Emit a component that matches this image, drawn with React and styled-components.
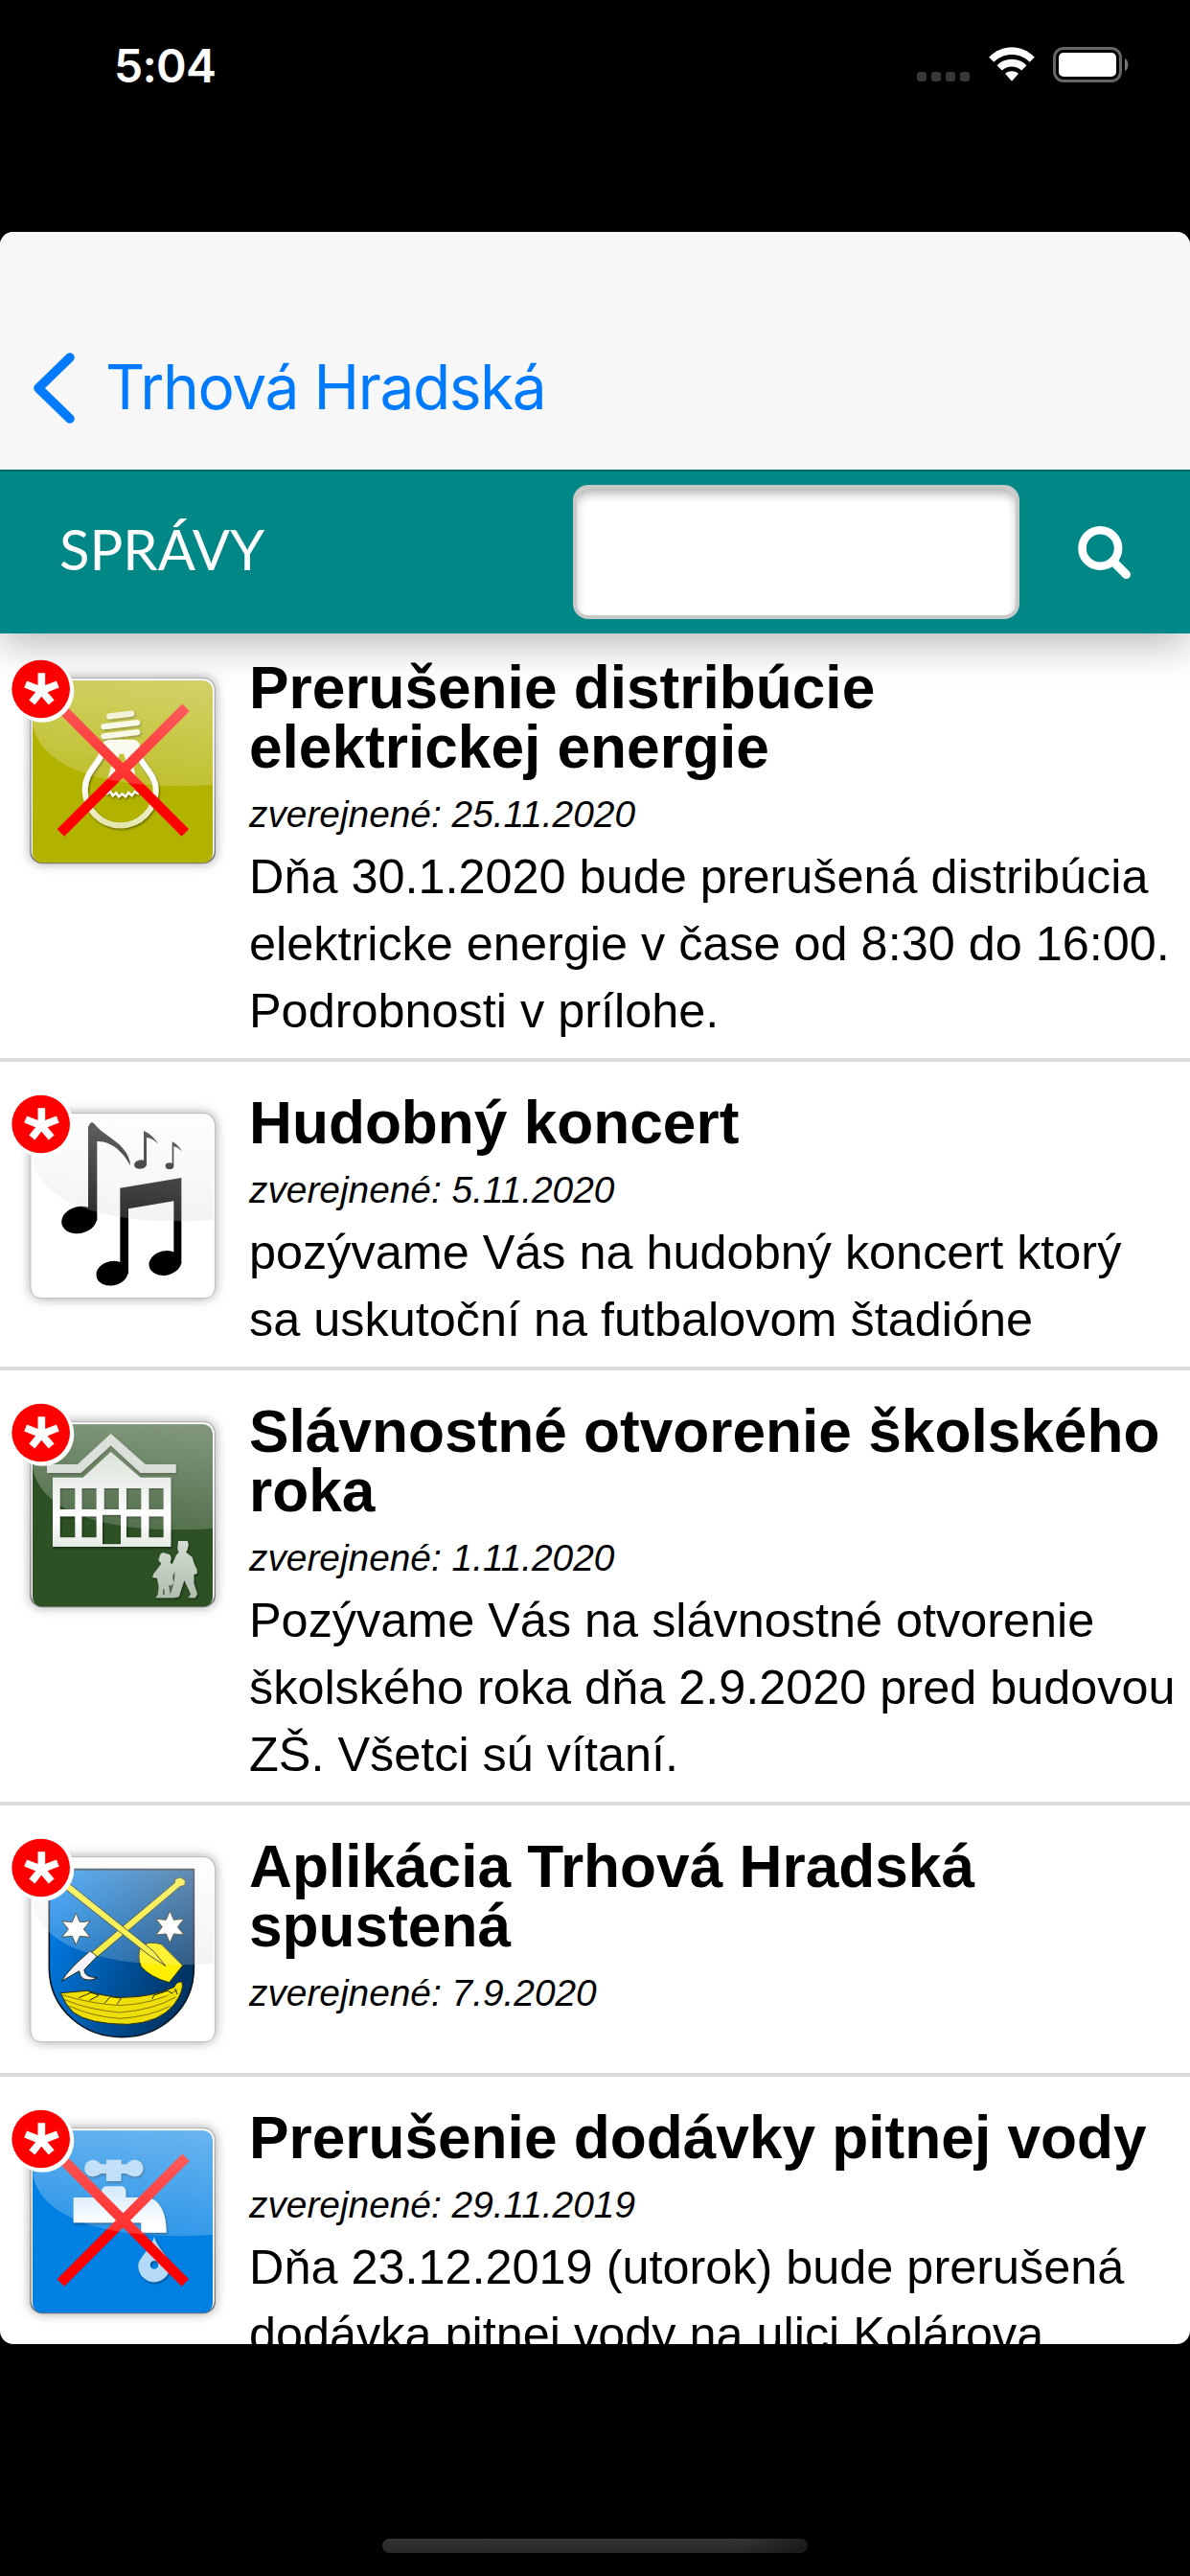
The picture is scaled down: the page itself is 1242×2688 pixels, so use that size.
import React from "react";
import styled, { createGlobalStyle } from "styled-components";

const GlobalStyle = createGlobalStyle`
  * { box-sizing: border-box; }
  body { margin: 0; background: #000; }
`;

const Screen = styled.div`
  display: flex;
  flex-direction: column;
  width: 1242px;
  height: 2688px;
  overflow: hidden;
  background: #000;
  color: #000;
  font-family: "Liberation Sans", Arial, sans-serif;
`;

const StatusBar = styled.header`
  display: flex;
  justify-content: space-between;
  align-items: flex-start;
  height: 242px;
  padding: 49px 64px 0 119px;
`;

const Clock = styled.span`
  color: #fff;
  font: 600 48px/40px Inter, sans-serif;
  letter-spacing: -0.7px;
`;

const StatusIcons = styled.div`
  display: flex;
  align-items: flex-start;
`;

const Signal = styled.div`
  display: flex;
  gap: 5px;
  margin: 26px 20px 0 0;
`;

const SignalDot = styled.i`
  width: 10px;
  height: 10px;
  border-radius: 3px;
  background: #383838;
`;

const WifiIcon = styled.svg`
  width: 48px;
  height: 37px;
  margin-right: 19px;
`;

const BatteryIcon = styled.svg`
  width: 79px;
  height: 37px;
`;

const Sheet = styled.main`
  display: flex;
  flex-direction: column;
  height: 2204px;
  border-radius: 14px;
  overflow: hidden;
  background: #fff;
`;

const NavBar = styled.nav`
  display: flex;
  flex: none;
  align-items: flex-end;
  position: relative;
  z-index: 2;
  height: 248px;
  padding: 0 0 46px 31px;
  background: #f7f7f7;
`;

const BackLink = styled.a`
  display: flex;
  align-items: center;
  gap: 27px;
  color: #007aff;
  font: 400 64px/80px Inter, sans-serif;
  letter-spacing: -1.4px;
`;

const Chevron = styled.svg`
  width: 52px;
  height: 80px;
`;

const Toolbar = styled.div`
  display: flex;
  flex: none;
  align-items: center;
  position: relative;
  z-index: 1;
  height: 171px;
  padding: 0 61px 0 62px;
  background: #008786;
  box-shadow: inset 0 2px 0 #006c6b, 0 12px 40px rgba(0, 0, 0, 0.27);
`;

const ToolbarTitle = styled.h1`
  flex: 1;
  margin: 0;
  padding-bottom: 6px;
  color: #fff;
  font: 400 58px/70px Lato, sans-serif;
`;

const SearchField = styled.input`
  width: 466px;
  height: 140px;
  border: 4px solid #c9c9c9;
  border-radius: 16px;
  background: #fff;
  box-shadow: inset 0 7px 11px -2px rgba(0, 0, 0, 0.3);
`;

const SearchIcon = styled.svg`
  width: 56px;
  height: 56px;
  margin-left: 61px;
`;

const NewsList = styled.ul`
  flex: none;
  margin: -7px 0 0;
  padding: 0;
  list-style: none;
`;

const NewsRow = styled.li`
  display: flex;
  padding-right: 11px;
  border-bottom: 4px solid #dcdcdc;
`;

const NewsIcon = styled.svg`
  flex: none;
  width: 250px;
  height: 250px;
  margin: 16px 10px 13px 0;
`;

const NewsText = styled.article`
  padding: 33px 0 14px;
`;

const NewsTitle = styled.h2`
  margin: 0;
  font-size: 62.2px;
  font-weight: 700;
  line-height: 62px;
`;

const NewsDate = styled.p`
  margin: 8px 0 0;
  font-size: 38.85px;
  font-style: italic;
  line-height: 61px;
`;

const NewsBody = styled.p`
  margin: 0;
  font-size: 50.4px;
  line-height: 70px;
`;

const HomeBar = styled.footer`
  display: flex;
  justify-content: center;
  padding-top: 203px;
`;

const HomeIndicator = styled.div`
  width: 444px;
  height: 15px;
  border-radius: 8px;
  background: linear-gradient(90deg, transparent 85%, rgba(0, 0, 0, 0.4)),
    linear-gradient(#343434, #262626);
`;

function Cross() {
  return (
    <path d="M190 205 580 597M190 597 582 205" stroke="#f00" strokeWidth="32" fill="none" />
  );
}

function Bulb() {
  return (
    <>
      <g fill="none" stroke="#f6f6e0" strokeLinecap="round" filter="url(#artShadow)">
        <path d="M343 232 411 224" stroke="#ecedc6" strokeWidth="19" />
        <path d="M325 265 430 252M325 295 430 282" strokeWidth="18" />
        <path d="M320 348C305 385 266 410 266 462A111 112 0 0 0 488 462C488 412 438 385 432 345" stroke="url(#bulbGlass)" strokeWidth="18" />
        <path d="M335 475l10-8 8 14 11-9 8 12 11-9 10 9 9-13 11 9 9-12 10 6" stroke="#fff" strokeWidth="7" />
      </g>
      <path d="M316 350 321 320Q326 305 346 305H414Q435 307 438 322V345L410 350 435 470 415 455 388 350H374L342 470 330 455 358 350Z" fill="#f8f8ea" />
      <Cross />
    </>
  );
}

function Notes() {
  return (
    <g transform="translate(0 4)" fill="#000">
      <path d="M276 152Q285 128 297 144C318 172 358 188 384 218Q408 246 408 273C390 235 350 195 304 197V445H276Z" />
      <ellipse cx="248" cy="443" rx="56" ry="42" transform="rotate(-14 248 443)" />
      <path d="M376 343 568 311V580H544V384L402 408V612H376Z" />
      <ellipse cx="351" cy="610" rx="50" ry="38" transform="rotate(-12 351 610)" />
      <ellipse cx="517" cy="578" rx="51" ry="38" transform="rotate(-12 517 578)" />
      <path d="M450 163Q480 178 496 206 480 188 459 185V269H450Z" />
      <ellipse cx="440" cy="269" rx="20" ry="14" transform="rotate(-10 440 269)" />
      <path d="M539 198Q558 208 570 228 556 215 544 212V274H539Z" />
      <ellipse cx="531" cy="274" rx="13" ry="10" />
    </g>
  );
}

function School() {
  return (
    <g transform="translate(0 -3)" filter="url(#artShadow)">
      <path d="M147 249H243L347 153 455 249H551V276H440L347 190 253 276H147Z" fill="#c9d2c6" />
      <path
        d="M165 290H260L347 210 440 290H535V507H165ZM188 324V390H235V324ZM256 324V390H302V324ZM326 324V390H372V324ZM396 324V390H442V324ZM466 324V390H512V324ZM188 412V478H235V412ZM256 412V478H302V412ZM321 407V499H378V407ZM396 412V478H442V412ZM466 412V478H512V412Z"
        fillRule="evenodd"
        fill="url(#schoolWall)"
      />
      <path
        d="M558 489H587L590 499 587 516 582 524 602 540 608 560 617 580V591L607 594V622L618 655 611 667H590L597 655 577 612 560 664 545 667H487L494 658 497 633 492 606 477 602 481 592 497 571 505 560 496 549 502 530 510 525 532 532 536 542 533 557 539 562 552 533 560 525 556 513Z"
        fill="url(#walkers)"
      />
      <path d="M547 585 540 600 544 622 547 602ZM528 627 535 629 544 622 533 657ZM510 640 515 640V658H510Z" fill="#506a4b" />
    </g>
  );
}

const star = "0,-50 12,-22 44,-25 24,0 44,25 12,22 0,50 -12,22 -44,25 -24,0 -44,-25 -12,-22";

function CoatOfArms() {
  return (
    <g stroke="#262a10" strokeWidth="3">
      <path d="M154 152H607V460C607 590 500 677 382 677 262 677 154 590 154 460Z" fill="url(#shield)" stroke="#0a1420" strokeWidth="5" />
      <path d="M287 412 547 194 549 182 565 177 580 186 579 202 563 206 304 426Z" fill="#f2e81c" />
      <path d="M282 408 304 424 264 466Q262 489 303 491 286 503 262 495 249 487 248 470L193 502Q215 463 282 408Z" fill="#f4f4f8" />
      <path d="M440 395Q463 374 505 386L572 453 530 506Q470 490 441 455 429 425 440 395Z" fill="#ffee00" />
      <path d="M190 202 204 186 482 409 518 454 470 423Z" fill="#f7ec20" />
      <polygon points={star} transform="translate(238 339)" fill="#fff" />
      <polygon points={star} transform="translate(532 332)" fill="#fff" />
      <path d="M190 539 272 532Q325 550 385 553 480 552 546 520 552 502 570 504 578 530 545 575 500 632 400 637 280 637 230 600 204 575 190 539Z" fill="#efdf08" />
      <path d="M196 545Q280 572 375 578 485 573 555 530M202 560Q280 592 375 600 480 592 550 552M217 580Q290 613 375 619 470 613 532 580" fill="none" stroke="#86760a" />
      <path d="M247 554 285 538 310 546 280 562M327 572 345 551 380 555 366 574M477 558 482 546 525 532 540 541M548 525 555 543" fill="#ffe900" />
    </g>
  );
}

function Tap() {
  return (
    <>
      <g transform="translate(0 -10)" filter="url(#artShadow)">
        <path d="M333 222H380V236H396Q408 222 422 222A26 26 0 0 1 422 275Q408 274 396 265H379V289H333V265H316Q304 274 291 275A26 26 0 0 1 291 222Q304 222 316 236H333Z" fill="#a7d2f5" />
        <path d="M318 340V322Q318 305 336 305H377Q394 305 394 322V340H455C500 342 521 387 521 450H442V419H230V340Z" fill="url(#pipe)" />
        <path d="M483 463C495 505 532 525 532 555A49 49 0 0 1 433 555C433 528 471 505 483 463ZM483 538A13 13 0 1 0 483 564 13 13 0 0 0 483 538Z" fill="#b5daf7" fillRule="evenodd" />
      </g>
      <Cross />
    </>
  );
}

function Tile({ color, children }) {
  const light = color === "#ffffff";
  return (
    <NewsIcon viewBox="0 0 750 750">
      <rect x="94" y="111" width="581" height="583" rx="38" filter="url(#tileShadow)" fill="#777" />
      <rect x="94" y="111" width="581" height="583" rx="38" fill={light ? "#c2c2c2" : "url(#rim)"} />
      <rect x="98" y="115" width="573" height="573" rx="34" fill="#fff" />
      <rect x={light ? 98 : 102} y="121" width={light ? 573 : 564} height={light ? 569 : 570} rx="29" fill={color} />
      {light && <path d="M103 260V151Q103 121 133 121H638Q667 121 667 150V446C480 462 140 445 103 260Z" fill="url(#paleGloss)" />}
      {children}
      <path d="M103 260V151Q103 121 133 121H638Q667 121 667 150V446C480 462 140 445 103 260Z" fill="url(#gloss)" />
      <circle cx="133" cy="152" r="99" fill="#fff" />
      <circle cx="128" cy="147" r="91" fill="#f00" />
      <path d="M130 152V97M130 152 181 132M130 152 80 132M130 152 161 189M130 152 100 189" fill="none" stroke="#fff" strokeWidth="23" />
    </NewsIcon>
  );
}

const Defs = styled.svg`
  position: absolute;
  width: 0;
  height: 0;
`;

function IconPaints() {
  return (
    <Defs>
      <defs>
        <filter id="tileShadow" x="-20%" y="-20%" width="140%" height="140%">
          <feGaussianBlur stdDeviation="17" />
          <feComponentTransfer><feFuncA type="linear" slope="0.65" /></feComponentTransfer>
        </filter>
        <filter id="artShadow" x="-10%" y="-10%" width="125%" height="125%">
          <feDropShadow dx="3" dy="4" stdDeviation="3" floodColor="#000" floodOpacity="0.5" />
        </filter>
        <linearGradient id="gloss" x1="0.7" y1="0" x2="0.5" y2="1">
          <stop offset="0" stopColor="#fff" stopOpacity="0.4" />
          <stop offset="1" stopColor="#fff" stopOpacity="0.18" />
        </linearGradient>
        <linearGradient id="paleGloss" x1="0" y1="0" x2="0" y2="1">
          <stop offset="0" stopColor="#fcfcfc" />
          <stop offset="1" stopColor="#f0f0f0" />
        </linearGradient>
        <linearGradient id="rim" x1="0" y1="0" x2="0" y2="1">
          <stop offset="0" stopColor="#b8b8b8" />
          <stop offset="1" stopColor="#777" />
        </linearGradient>
        <linearGradient id="bulbGlass" x1="0" y1="0" x2="0" y2="1">
          <stop offset="0.4" stopColor="#fff" />
          <stop offset="1" stopColor="#e5e5ad" />
        </linearGradient>
        <linearGradient id="schoolWall" x1="0" y1="0" x2="0" y2="1">
          <stop offset="0" stopColor="#ccd5ca" />
          <stop offset="0.7" stopColor="#fff" />
          <stop offset="1" stopColor="#e4e8e3" />
        </linearGradient>
        <linearGradient id="walkers" x1="0" y1="0" x2="0" y2="1">
          <stop offset="0" stopColor="#d5dcd3" />
          <stop offset="1" stopColor="#b2beb0" />
        </linearGradient>
        <linearGradient id="shield" x1="0" y1="0.3" x2="0.9" y2="0.7">
          <stop offset="0" stopColor="#007de8" />
          <stop offset="1" stopColor="#003566" />
        </linearGradient>
        <linearGradient id="pipe" x1="0" y1="0" x2="0" y2="1">
          <stop offset="0" stopColor="#c4e1f8" />
          <stop offset="0.8" stopColor="#fff" />
        </linearGradient>
      </defs>
    </Defs>
  );
}

const news = [
  {
    title: "Prerušenie distribúcie elektrickej energie",
    date: "25.11.2020",
    body: "Dňa 30.1.2020 bude prerušená distribúcia elektricke energie v čase od 8:30 do 16:00. Podrobnosti v prílohe.",
    color: "#b2b200",
    Art: Bulb,
  },
  {
    title: "Hudobný koncert",
    date: "5.11.2020",
    body: "pozývame Vás na hudobný koncert ktorý sa uskutoční na futbalovom štadióne",
    color: "#ffffff",
    Art: Notes,
  },
  {
    title: "Slávnostné otvorenie školského roka",
    date: "1.11.2020",
    body: "Pozývame Vás na slávnostné otvorenie školského roka dňa 2.9.2020 pred budovou ZŠ. Všetci sú vítaní.",
    color: "#2d5024",
    Art: School,
  },
  {
    title: "Aplikácia Trhová Hradská spustená",
    date: "7.9.2020",
    color: "#ffffff",
    Art: CoatOfArms,
  },
  {
    title: "Prerušenie dodávky pitnej vody",
    date: "29.11.2019",
    body: "Dňa 23.12.2019 (utorok) bude prerušená dodávka pitnej vody na ulici Kolárova",
    color: "#0080e3",
    Art: Tap,
  },
];

export default function App() {
  return (
    <Screen>
      <GlobalStyle />
      <IconPaints />
      <StatusBar>
        <Clock>5:04</Clock>
        <StatusIcons>
          <Signal>
            <SignalDot />
            <SignalDot />
            <SignalDot />
            <SignalDot />
          </Signal>
          <WifiIcon viewBox="0 0 48 37">
            <g fill="#fff">
              <path d="M0.2 10.7C13.5-3.3 34.5-3.3 47.8 10.7L42.7 15.8C32.3 5.5 15.7 5.5 5.3 15.8Z" />
              <path d="M8.5 19.2C17.3 10.7 30.7 10.7 39.5 19.2L34.2 24.5C28.3 19.2 19.7 19.2 13.8 24.5Z" />
              <path d="M17 27.8C21 24.5 27 24.5 31 27.8L24 35.8Z" />
            </g>
          </WifiIcon>
          <BatteryIcon viewBox="0 0 79 37">
            <rect x="1.5" y="1.5" width="69" height="34" rx="9.5" fill="none" stroke="#666" strokeWidth="3" />
            <rect x="6" y="6" width="60" height="25" rx="5" fill="#fff" />
            <path d="M75 12C79.5 14 79.5 23 75 25Z" fill="#777" />
          </BatteryIcon>
        </StatusIcons>
      </StatusBar>
      <Sheet>
        <NavBar>
          <BackLink>
            <Chevron viewBox="0 0 52 80">
              <path d="M42 9 9 41 42 73" fill="none" stroke="#007aff" strokeWidth="9.5" strokeLinecap="round" strokeLinejoin="round" />
            </Chevron>
            Trhová Hradská
          </BackLink>
        </NavBar>
        <Toolbar>
          <ToolbarTitle>SPRÁVY</ToolbarTitle>
          <SearchField aria-label="Hľadať" />
          <SearchIcon viewBox="0 0 56 56">
            <g fill="none" stroke="#fff">
              <path d="M38 39 50.5 51.5" strokeWidth="9" strokeLinecap="round" />
              <circle cx="23.3" cy="24" r="18.8" strokeWidth="8.6" />
            </g>
          </SearchIcon>
        </Toolbar>
        <NewsList>
          {news.map(({ title, date, body, color, Art }) => (
            <NewsRow key={title}>
              <Tile color={color}>
                <Art />
              </Tile>
              <NewsText>
                <NewsTitle>{title}</NewsTitle>
                <NewsDate>zverejnené: {date}</NewsDate>
                {body && <NewsBody>{body}</NewsBody>}
              </NewsText>
            </NewsRow>
          ))}
        </NewsList>
      </Sheet>
      <HomeBar>
        <HomeIndicator />
      </HomeBar>
    </Screen>
  );
}
